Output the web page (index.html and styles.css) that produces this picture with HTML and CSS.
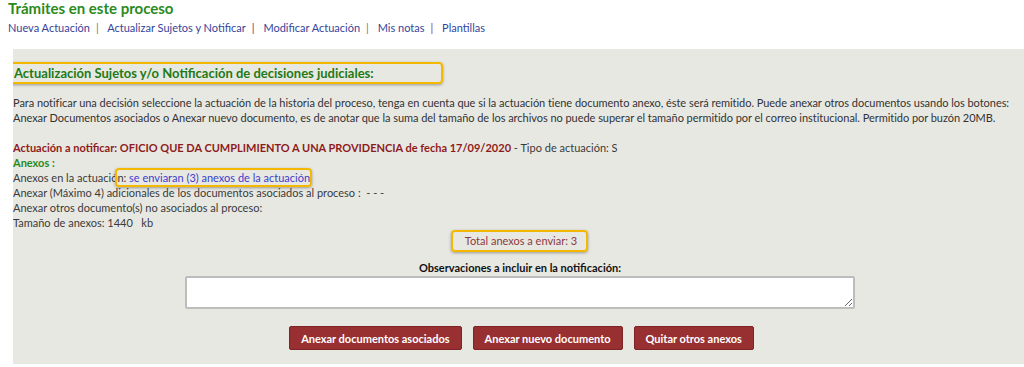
FILE: index.html
```html
<!DOCTYPE html>
<html lang="es">
<head>
<meta charset="utf-8">
<title>Trámites en este proceso</title>
<link rel="stylesheet" href="styles.css">
</head>
<body>
<div class="top">
  <h1 class="title">Trámites en este proceso</h1>
  <nav class="links">
    <a href="#">Nueva Actuación</a><span class="sep">|</span>
    <a href="#">Actualizar Sujetos y Notificar</a><span class="sep sep-p">|</span>
    <a href="#">Modificar Actuación</a><span class="sep">|</span>
    <a href="#">Mis notas</a><span class="sep sep-p">|</span>
    <a href="#">Plantillas</a>
  </nav>
</div>
<section class="panel">
  <div class="heading-row"><h2 class="heading hl">Actualización Sujetos y/o Notificación de decisiones judiciales:</h2></div>
  <p class="intro">Para notificar una decisión seleccione la actuación de la historia del proceso, tenga en cuenta que si la actuación tiene documento anexo, éste será remitido. Puede anexar otros documentos usando los botones: Anexar Documentos asociados o Anexar nuevo documento, es de anotar que la suma del tamaño de los archivos no puede superar el tamaño permitido por el correo institucional. Permitido por buzón 20MB.</p>
  <div class="details">
    <div class="line"><span class="act">Actuación a notificar: OFICIO QUE DA CUMPLIMIENTO A UNA PROVIDENCIA de fecha 17/09/2020</span> - Tipo de actuación: S</div>
    <div class="line anexos">Anexos :</div>
    <div class="line">Anexos en la actuació<span class="hl inline">n: <span class="blue">se enviaran (3) anexos de la actuación</span></span></div>
    <div class="line">Anexar (Máximo 4) adicionales de los documentos asociados al proceso :&nbsp; - - -</div>
    <div class="line">Anexar otros documento(s) no asociados al proceso:</div>
    <div class="line">Tamaño de anexos: 1440 &nbsp; kb</div>
  </div>
  <div class="total-row"><span class="hl total">Total anexos a enviar: 3</span></div>
  <div class="obs">
    <label class="obs-label" for="obs">Observaciones a incluir en la notificación:</label>
    <textarea id="obs" class="obs-text"></textarea>
  </div>
  <div class="buttons">
    <button class="btn">Anexar documentos asociados</button>
    <button class="btn">Anexar nuevo documento</button>
    <button class="btn">Quitar otros anexos</button>
  </div>
</section>
</body>
</html>
```

FILE: styles.css
```css
html, body {
  margin: 0;
  padding: 0;
  background: #ffffff;
}
body {
  font-family: Lato, "Open Sans", sans-serif;
  font-size: 11px;
  color: #3a3a3a;
  width: 1024px;
  height: 367px;
  overflow: hidden;
}
.top {
  padding: 0 0 0 8px;
  height: 49px;
  box-sizing: border-box;
}
.title {
  margin: 0;
  padding-top: 0;
  font-size: 15px;
  line-height: 16px;
  font-weight: 700;
  color: #2b8a1c;
}
.links {
  margin-top: 4px;
  line-height: 16px;
  font-size: 11px;
}
.links a {
  color: #35449a;
  text-decoration: none;
}
.sep {
  color: #777;
  margin: 0 6px;
}
.sep-p {
  color: #8a2c6a;
}
.panel {
  margin-left: 13px;
  background: #e8e8e3;
  height: 315px;
  padding: 13px 0 0 0;
  box-sizing: border-box;
  overflow: hidden;
}
.hl {
  border: 2px solid #f5b800;
  border-radius: 4px;
  box-shadow: 0 1px 3px rgba(0,0,0,0.35);
}
.heading-row {
  margin-left: -6px;
}
.heading {
  display: inline-block;
  width: 436px;
  box-sizing: border-box;
  margin: 0;
  padding: 1px 5px;
  height: 22px;
  font-size: 13px;
  line-height: 16px;
  font-weight: 700;
  color: #1f7a16;
}
.intro {
  margin: 11px 0 0 0;
  line-height: 15px;
  color: #333;
  padding-right: 10px;
  letter-spacing: -0.04px;
}
.details {
  margin-top: 15px;
}
.line {
  line-height: 15px;
}
.act {
  color: #8e1b1b;
  font-weight: 700;
}
.anexos {
  color: #2b8a1c;
  font-weight: 700;
}
.inline {
  padding: 1px 0 1px 0;
  margin-left: -2px;
}
.blue {
  color: #3d3dcc;
}
.total-row {
  text-align: center;
  margin-top: 0;
  margin-left: 2px;
}
.total {
  display: inline-block;
  padding: 1px 9px 1px 12px;
  color: #8b3a40;
  font-size: 11px;
  line-height: 16px;
}
.obs {
  display: flex;
  flex-direction: column;
  align-items: center;
  margin-top: 9px;
  margin-left: 3px;
}
.obs-label {
  font-weight: 700;
  color: #111;
  line-height: 14px;
}
.obs-text {
  width: 670px;
  height: 33px;
  box-sizing: border-box;
  border: 2px solid #bdbdbd;
  border-radius: 2px;
  background: #fff;
  margin-top: 1px;
  resize: both;
}
.buttons {
  display: flex;
  justify-content: center;
  gap: 11px;
  margin-top: 17px;
  margin-left: 6px;
}
.btn {
  background: #982f31;
  color: #fff;
  font-family: Lato, "Open Sans", sans-serif;
  font-weight: 700;
  font-size: 11px;
  border: 1px solid #7c2426;
  border-radius: 2px;
  height: 24px;
  padding: 0 11px;
}
```
